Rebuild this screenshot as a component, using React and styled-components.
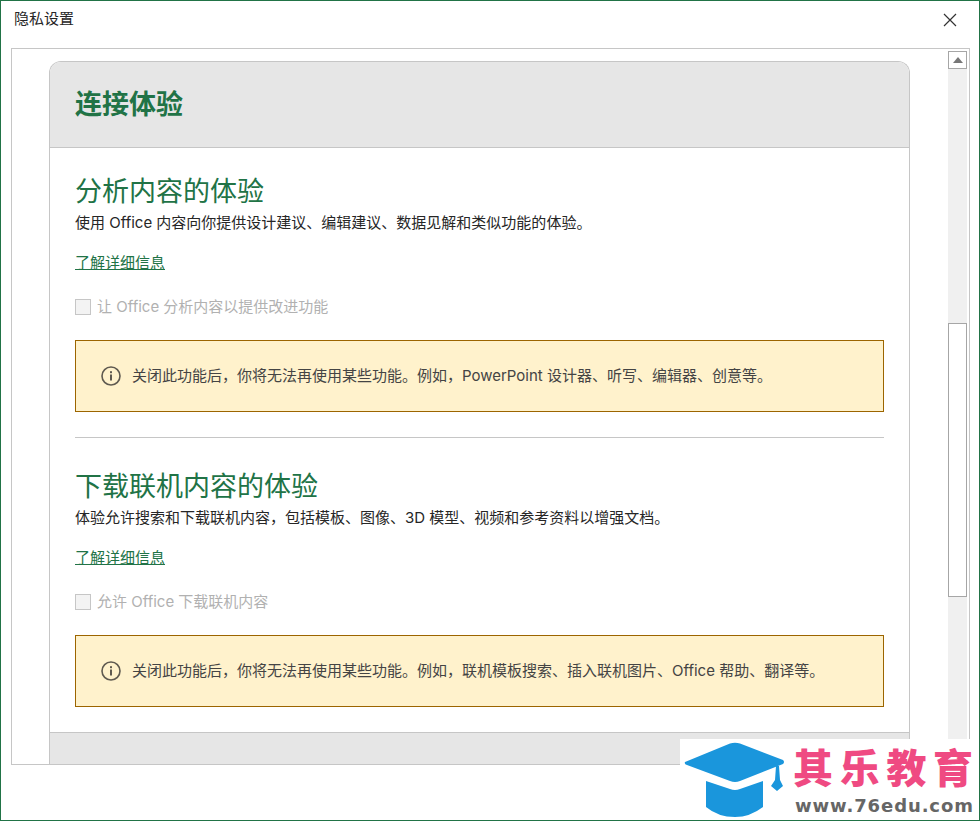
import React from 'react';
import styled, { createGlobalStyle } from 'styled-components';

const Global = createGlobalStyle`
  html, body { margin: 0; padding: 0; background: #fff; }
  * { box-sizing: border-box; }
`;

const Win = styled.div`
  position: relative;
  width: 980px;
  height: 821px;
  border: 1px solid #217346;
  background: #fff;
  overflow: hidden;
  padding: 0 9px 0 10px;
  font-family: "Inter", "Noto Sans CJK SC", sans-serif;
  color: #262626;
`;
const TitleBar = styled.header`
  display: flex;
  align-items: center;
  justify-content: space-between;
  height: 47px;
  padding: 0 13px 9px 3px;
`;
const TitleText = styled.div`
  font-size: 15px;
  line-height: 20px;
  padding-bottom: 2px;
  color: #262626;
`;
const CloseBtn = styled.button`
  display: flex;
  border: 0;
  padding: 0;
  background: none;
`;
const Panel = styled.div`
  display: flex;
  height: 717px;
  border: 1px solid #c6c6c6;
  overflow: hidden;
`;
const Scroller = styled.main`
  flex: 1;
  padding: 12px 37px 0;
  min-width: 0;
`;
const Card = styled.div`
  width: 861px;
  border: 1px solid #c6c6c6;
  border-radius: 12px 12px 0 0;
  border-bottom: 0;
`;
const CardHead = styled.div`
  height: 86px;
  background: #e6e6e6;
  border-bottom: 1px solid #c6c6c6;
  border-radius: 11px 11px 0 0;
  padding-left: 25px;
  display: flex;
  align-items: center;
`;
const CardTitle = styled.h1`
  margin: 0;
  font-size: 27px;
  font-weight: 700;
  line-height: 40px;
  color: #217346;
`;
const CardBody = styled.div`
  padding: 22px 25px 25px;
`;
const Heading = styled.h2`
  margin: 0;
  padding-top: 4px;
  font-size: 27px;
  font-weight: 400;
  line-height: 36px;
  color: #217346;
`;
const Desc = styled.p`
  margin: 0;
  padding-top: 2px;
  font-size: 15px;
  line-height: 22px;
`;
const More = styled.a`
  display: block;
  margin-top: 16px;
  padding-top: 2px;
  font-size: 15px;
  line-height: 22px;
  color: #217346;
  text-decoration: underline;
`;
const CheckRow = styled.label`
  display: flex;
  align-items: center;
  gap: 6px;
  height: 24px;
  margin-top: 21px;
  font-size: 15px;
  color: #b1b1b1;
`;
const CheckLabel = styled.span`
  line-height: 22px;
`;
const CheckBox = styled.span`
  width: 16px;
  height: 16px;
  border: 1px solid #c6c6c6;
  background: #f3f3f3;
`;
const Notice = styled.div`
  display: flex;
  align-items: center;
  gap: 11px;
  height: 72px;
  margin-top: 21px;
  padding-left: 25px;
  background: #fff2cc;
  border: 1px solid #9c6500;
  font-size: 15px;
  color: #444;
`;
const NoticeText = styled.span`
  padding-bottom: 3px;
`;
const Rule = styled.hr`
  margin: 25px 0 27px;
  border: 0;
  border-top: 1px solid #c6c6c6;
`;
const CardFoot = styled.div`
  height: 40px;
  background: #e6e6e6;
  border-top: 1px solid #c6c6c6;
`;
const ScrollBar = styled.aside`
  display: flex;
  flex-direction: column;
  width: 19px;
  margin: 2px 2px 0 0;
  background: #f0f0f0;
`;
const ScrollUp = styled.div`
  display: flex;
  align-items: center;
  justify-content: center;
  height: 18px;
  border: 1px solid #a6a6a6;
  background: #fff;
`;
const Thumb = styled.div`
  height: 274px;
  margin-top: 254px;
  border: 1px solid #a6a6a6;
  background: #fff;
`;
const Brand = styled.div`
  position: absolute;
  right: -1px;
  bottom: -1px;
  width: 300px;
  height: 82px;
  background: #fff;
`;
const BrandLogo = styled.svg`
  position: absolute;
  left: 0;
  top: 0;
`;
const BrandText = styled.div`
  position: absolute;
  left: 113px;
  top: 0;
  width: 187px;
`;
const BrandName = styled.div`
  font-family: "Noto Sans CJK SC", sans-serif;
  font-weight: 900;
  font-size: 40px;
  line-height: 55px;
  letter-spacing: 6.7px;
  color: #ef4a82;
  white-space: nowrap;
`;
const BrandUrl = styled.div`
  margin: 2px 0 0 2px;
  font-family: "DejaVu Sans", sans-serif;
  font-weight: 700;
  font-size: 18px;
  line-height: 20px;
  letter-spacing: 0.9px;
  color: #666;
  white-space: nowrap;
`;

const Info = () => (
  <svg width="20" height="20" viewBox="0 0 20 20" fill="none">
    <circle cx="10" cy="10" r="9" stroke="#5f5a50" strokeWidth="1.6" />
    <rect x="9" y="8.5" width="2" height="6" fill="#5f5a50" />
    <rect x="9" y="5.2" width="2" height="2" fill="#5f5a50" />
  </svg>
);

const Section = ({ title, desc, check, note }) => (
  <section>
    <Heading>{title}</Heading>
    <Desc>{desc}</Desc>
    <More>了解详细信息</More>
    <CheckRow><CheckBox /><CheckLabel>{check}</CheckLabel></CheckRow>
    <Notice><Info /><NoticeText>{note}</NoticeText></Notice>
  </section>
);

export default function App() {
  return (
    <Win>
      <Global />
      <TitleBar>
        <TitleText>隐私设置</TitleText>
        <CloseBtn aria-label="关闭">
          <svg width="14" height="14" viewBox="0 0 14 14">
            <path d="M1 1 13 13M13 1 1 13" stroke="#333" strokeWidth="1.2" fill="none" />
          </svg>
        </CloseBtn>
      </TitleBar>
      <Panel>
        <Scroller>
          <Card>
            <CardHead><CardTitle>连接体验</CardTitle></CardHead>
            <CardBody>
              <Section
                title="分析内容的体验"
                desc="使用 Office 内容向你提供设计建议、编辑建议、数据见解和类似功能的体验。"
                check="让 Office 分析内容以提供改进功能"
                note="关闭此功能后，你将无法再使用某些功能。例如，PowerPoint 设计器、听写、编辑器、创意等。"
              />
              <Rule />
              <Section
                title="下载联机内容的体验"
                desc="体验允许搜索和下载联机内容，包括模板、图像、3D 模型、视频和参考资料以增强文档。"
                check="允许 Office 下载联机内容"
                note="关闭此功能后，你将无法再使用某些功能。例如，联机模板搜索、插入联机图片、Office 帮助、翻译等。"
              />
            </CardBody>
            <CardFoot />
          </Card>
        </Scroller>
        <ScrollBar>
          <ScrollUp>
            <svg width="10" height="6" viewBox="0 0 10 6"><path d="M5 0 10 6H0Z" fill="#777" /></svg>
          </ScrollUp>
          <Thumb />
        </ScrollBar>
      </Panel>
      <Brand>
        <BrandLogo width="110" height="82" viewBox="0 0 110 82">
          <path d="M5 23 50 4.5Q55 3 60 4.5L103 21Q105 23 103 25L60 42Q55 44 50 42L7 26Q4 25 5 23Z" fill="#1a96dc" />
          <path d="M26 42 50 50Q55 52 60 50L83 42V68Q70 78 55 78Q38 78 26 68Z" fill="#1a96dc" />
          <path d="M96 27H99L100 41 103 47 97 52 91 47 95 41Z" fill="#1a96dc" />
        </BrandLogo>
        <BrandText>
          <BrandName>其乐教育</BrandName>
          <BrandUrl>www.76edu.com</BrandUrl>
        </BrandText>
      </Brand>
    </Win>
  );
}
